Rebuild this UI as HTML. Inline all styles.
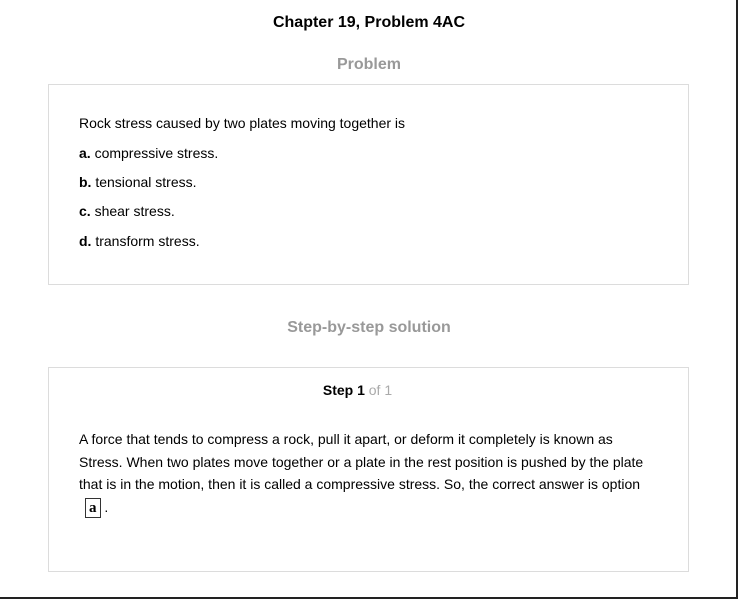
<!DOCTYPE html>
<html><head><meta charset="utf-8"><style>
html,body{margin:0;padding:0;}
body{width:738px;height:599px;position:relative;background:#fff;font-family:"Liberation Sans",Arial,sans-serif;color:#000;overflow:hidden;}
.frame{position:absolute;left:0;top:0;width:736px;height:597px;border-right:2px solid #222;border-bottom:2px solid #222;}
.t{position:absolute;left:0;width:738px;text-align:center;font-weight:bold;}
.box{position:absolute;left:48px;width:639px;border:1px solid #dcdcdc;}
.l{position:absolute;left:30px;font-size:14px;white-space:nowrap;}
.p{position:absolute;left:30px;width:578px;font-size:14px;line-height:22.5px;}
.ba{display:inline-block;border:1px solid #333;font-family:"Liberation Serif",serif;font-weight:bold;font-size:15px;line-height:16px;padding:1px 3px;margin-left:6px;}
</style></head><body>
<div class="frame"></div>
<div class="t" style="top:14px;font-size:16px;">Chapter 19, Problem 4AC</div>
<div class="t" style="top:56px;font-size:16px;color:#999;">Problem</div>
<div class="box" style="top:84px;height:199px;">
<div class="l" style="top:30px;">Rock stress caused by two plates moving together is</div>
<div class="l" style="top:60px;"><b>a.</b> compressive stress.</div>
<div class="l" style="top:89px;"><b>b.</b> tensional stress.</div>
<div class="l" style="top:118px;"><b>c.</b> shear stress.</div>
<div class="l" style="top:148px;"><b>d.</b> transform stress.</div>
</div>
<div class="t" style="top:319px;font-size:16px;color:#999;">Step-by-step solution</div>
<div class="box" style="top:367px;height:203px;">
<div style="position:absolute;top:14px;left:0;width:617px;text-align:center;font-size:14px;"><b>Step 1</b> <span style="color:#aaa">of 1</span></div>
<div class="p" style="top:60px;">A force that tends to compress a rock, pull it apart, or deform it completely is known as Stress. When two plates move together or a plate in the rest position is pushed by the plate that is in the motion, then it is called a compressive stress. So, the correct answer is option<br><span class="ba">a</span> .</div>
</div>
</body></html>
